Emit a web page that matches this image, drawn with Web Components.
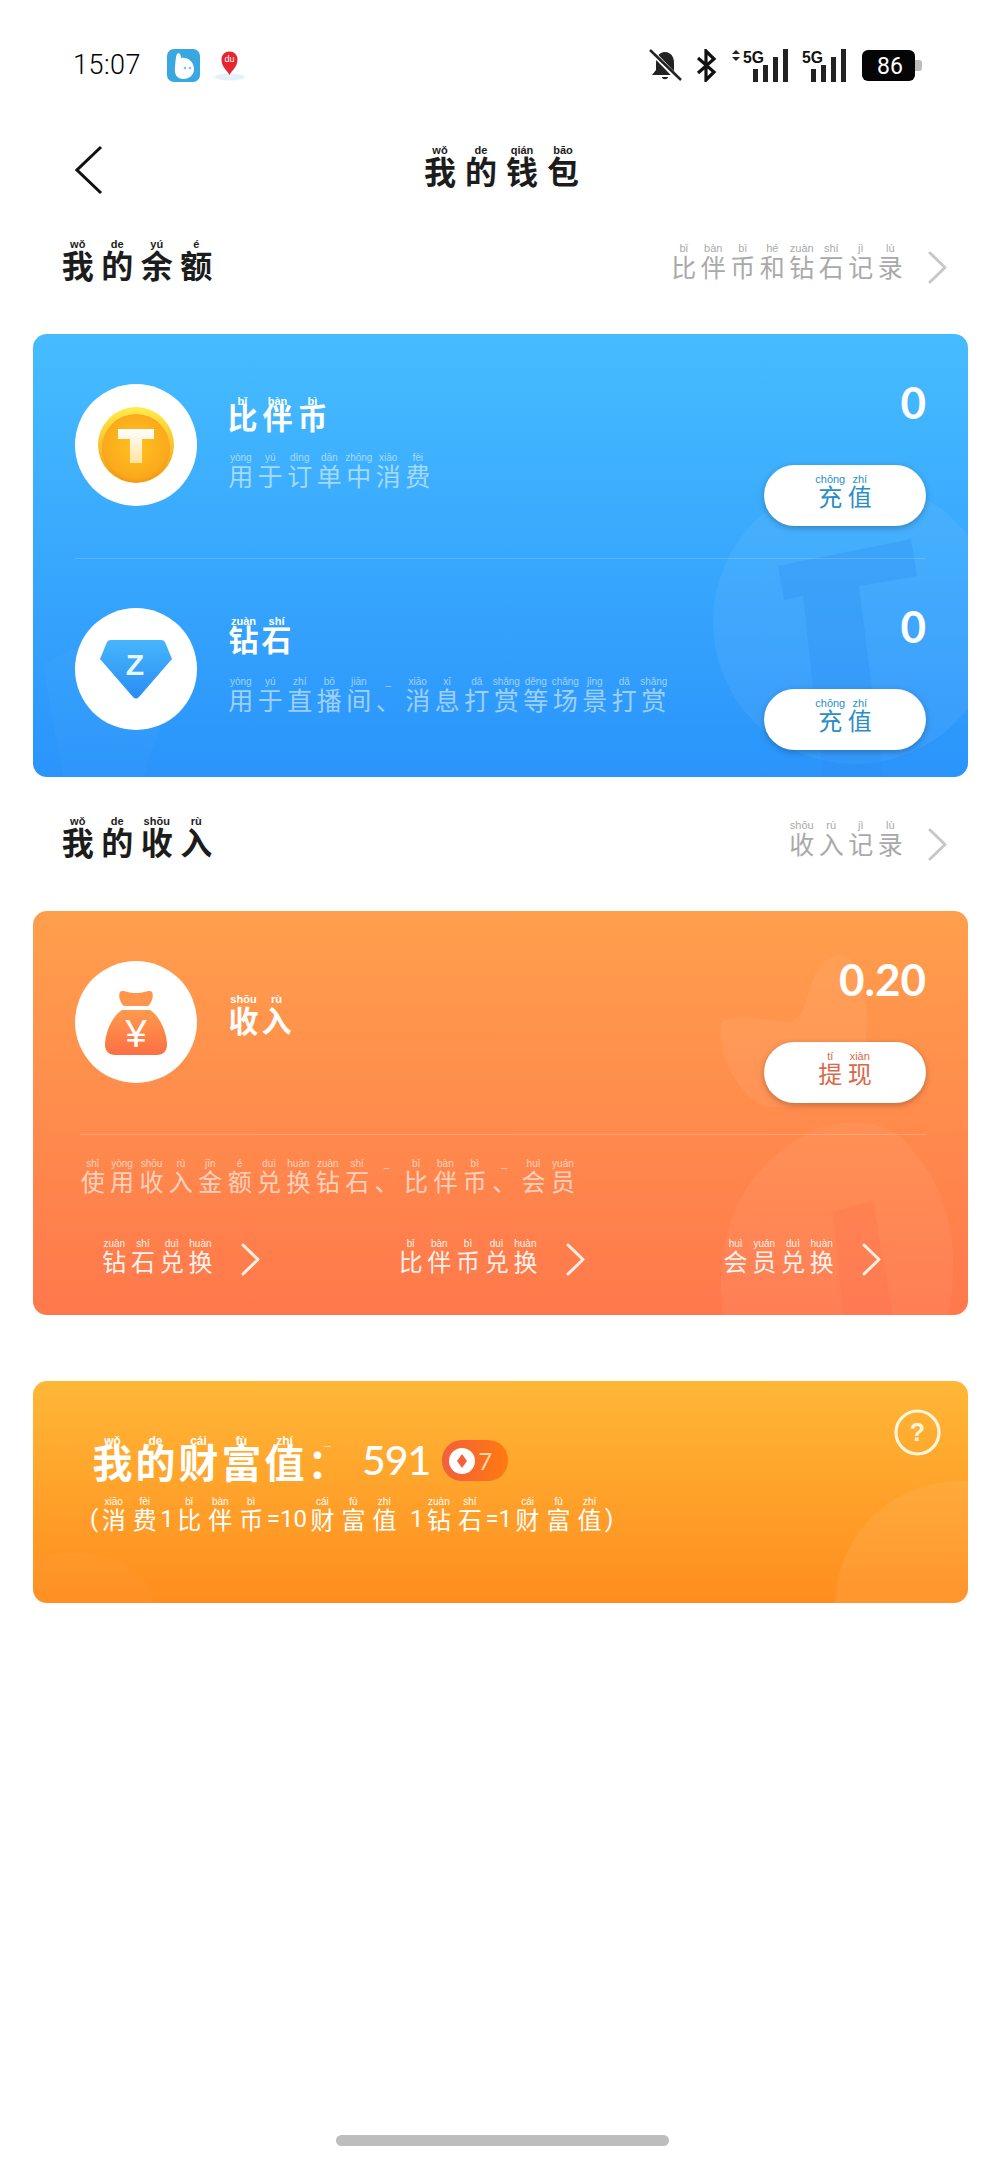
<!DOCTYPE html>
<html lang="zh">
<head>
<meta charset="utf-8">
<title>我的钱包</title>
<style>
html, body { margin: 0; background: #fff; }
body { font-family: "Noto Sans CJK SC", "Liberation Sans", sans-serif; }
</style>
</head>
<body>
<wallet-page></wallet-page>
<script>
class BaseHTMLElement extends HTMLElement {
    constructor() {
        super();
        this.attachShadow({ mode: 'open' });
    }

    render() {
        return '';
    }

    connectedCallback() {
        this.shadowRoot.innerHTML = `<style>${this.constructor.styles}</style>${this.render()}`;
    }
}

// text with pinyin over each character, t="字:zì 字:zì 1 = _"
class PyText extends BaseHTMLElement {
    static get styles() {
        return `
        :host {
            display: inline-flex;
            align-items: flex-end;
            white-space: nowrap;
        }
        .u {
            display: inline-flex;
            flex-direction: column;
            align-items: center;
            width: var(--p, 30px);
        }
        .py {
            font: var(--pw, 400) var(--ps, 10px)/var(--ps, 10px) "Liberation Sans", Roboto, sans-serif;
            margin-bottom: var(--pg, 0px);
            color: var(--pc, currentColor);
        }
        .c, .x {
            font: var(--w, 400) var(--s, 24px)/var(--s, 24px) "Noto Sans CJK SC", "Liberation Sans", sans-serif;
        }
        .x {
            font-family: Roboto, "Liberation Sans", sans-serif;
            font-weight: 400;
        }
        .sp {
            width: 10px;
        }
        `;
    }

    render() {
        return (this.getAttribute('t') || '').split(' ').map((token) => {
            if (token == '_') return '<span class="sp"></span>';
            let parts = token.split(':');
            if (parts.length < 2) return `<span class="x">${token}</span>`;
            return `<span class="u"><span class="py">${parts[1]}</span><span class="c">${parts[0]}</span></span>`;
        }).join('');
    }
}

class ChevronIcon extends BaseHTMLElement {
    static get styles() {
        return `
        :host { display: inline-flex; }
        svg { display: block; }
        `;
    }

    render() {
        let w = this.getAttribute('w') || 19;
        let h = this.getAttribute('h') || 33;
        let color = this.getAttribute('color') || '#c8c8c8';
        let stroke = this.getAttribute('stroke') || 3;
        return `<svg width="${w}" height="${h}" viewBox="0 0 19 33"><path d="M2 2 L17 16.5 L2 31" fill="none" stroke="${color}" stroke-width="${stroke}" stroke-linecap="round" stroke-linejoin="round"/></svg>`;
    }
}

class StatusBar extends BaseHTMLElement {
    static get styles() {
        return `
        :host {
            display: flex;
            align-items: center;
            justify-content: space-between;
            height: 64px;
            padding: 33px 76px 3px 73px;
            color: #000;
        }
        .left, .right { display: flex; align-items: center; }
        .time {
            font: 300 27px/32px Roboto, "Liberation Sans", sans-serif;
            letter-spacing: .5px;
            width: 94px;
        }
        svg { display: block; }
        .map { margin-left: 13px; }
        .bt { margin-left: 14px; }
        .s1 { margin-left: 14px; }
        .s2 { margin-left: 13px; }
        .bat { margin-left: 14px; }
        `;
    }

    render() {
        return `
        <div class="left">
            <span class="time">15:07</span>
            <svg width="33" height="33" viewBox="0 0 33 33"><rect width="33" height="33" rx="7" fill="#39a7e0"/><path d="M10 5 C12 3 14 5 14 9 C21 8 27 13 27 20 C27 27 21 30 16 30 C10 30 7 25 8 18 C8.500 13 8.500 8 10 5Z" fill="#fff"/><circle cx="18" cy="19" r="1.300" fill="#7cc4ea"/><circle cx="23" cy="19" r="1.300" fill="#7cc4ea"/></svg>
            <svg class="map" width="33" height="33" viewBox="0 0 33 33"><ellipse cx="16.500" cy="28" rx="15" ry="3.500" fill="#e3f2f8"/><path d="M16.500 26 C13.500 20.500 8.500 18 8.500 10.500 C8.500 6 12 2.500 16.500 2.500 C21 2.500 24.500 6 24.500 10.500 C24.500 18 19.500 20.500 16.500 26Z" fill="#e5252f"/><text x="16.500" y="13" text-anchor="middle" font-family="Liberation Sans" font-size="9" fill="#fff">du</text></svg>
        </div>
        <div class="right">
            <svg width="33" height="33" viewBox="0 0 33 33"><path d="M16 3 C10 3 7 8 7 14 L7 21 L3 26 L26 26 L25 21 L25 14 C25 8 22 3 16 3Z M13 28 C13 31 19 31 19 28Z" fill="#222"/><path d="M2 2 L31 32" stroke="#fff" stroke-width="5"/><path d="M1 1 L32 31" stroke="#222" stroke-width="2.500"/></svg>
            <svg class="bt" width="21" height="33" viewBox="0 0 21 33"><path d="M2 9 L18 23 L10 31 L10 2 L18 10 L2 24" fill="none" stroke="#111" stroke-width="3.200"/></svg>
            <svg class="s1" width="58" height="33" viewBox="0 0 58 33"><path d="M5 1 L9 5 L1 5Z M5 12 L9 8 L1 8Z" fill="#222"/><text x="12" y="14" font-family="Liberation Sans" font-weight="700" font-size="16" textLength="21" lengthAdjust="spacingAndGlyphs" fill="#111">5G</text><rect x="22" y="20" width="5" height="13" fill="#222"/><rect x="32" y="16" width="5" height="17" fill="#222"/><rect x="42" y="8" width="5" height="25" fill="#222"/><rect x="52" y="0" width="5" height="33" fill="#222"/></svg>
            <svg class="s2" width="46" height="33" viewBox="0 0 46 33"><text x="0" y="14" font-family="Liberation Sans" font-weight="700" font-size="16" textLength="21" lengthAdjust="spacingAndGlyphs" fill="#111">5G</text><rect x="9" y="20" width="5" height="13" fill="#222"/><rect x="19" y="16" width="5" height="17" fill="#222"/><rect x="29" y="8" width="5" height="25" fill="#222"/><rect x="39" y="0" width="5" height="33" fill="#222"/></svg>
            <svg class="bat" width="62" height="33" viewBox="0 0 62 33"><rect x="0" y="1" width="53" height="31" rx="6" fill="#050505"/><path d="M53 11 L57 11 Q60 11 60 14 L60 19 Q60 22 57 22 L53 22Z" fill="#bcbcbc"/><text x="28" y="25" text-anchor="middle" font-family="Roboto" font-size="23" fill="#fff">86</text></svg>
        </div>
        `;
    }
}

class NavBar extends BaseHTMLElement {
    static get styles() {
        return `
        :host {
            display: grid;
            grid-template-columns: 1fr auto 1fr;
            align-items: center;
            height: 100px;
            padding: 0 75px;
            color: #1c1c1c;
        }
        svg { display: block; margin-top: 40px; }
        py-text { --s: 32px; --p: 41px; --ps: 11px; --pw: 700; --w: 700; --pg: -2px; margin: 30px 0 0 3px; }
        `;
    }

    render() {
        return `
        <svg width="28" height="50" viewBox="0 0 28 50"><path d="M26 2 L2 25 L26 48" fill="none" stroke="#111" stroke-width="3"/></svg>
        <py-text t="我:wǒ 的:de 钱:qián 包:bāo"></py-text>
        <span></span>
        `;
    }
}

class SectionHead extends BaseHTMLElement {
    static get styles() {
        return `
        :host {
            display: flex;
            align-items: center;
            justify-content: space-between;
            height: 134px;
            padding: 0 53px 0 58px;
        }
        .title { color: #1c1c1c; --s: 32px; --p: 39.500px; --ps: 11px; --pw: 700; --w: 700; --pg: -2px; margin-bottom: 15px; }
        .link { display: flex; align-items: center; color: #a9a9a9; --s: 25px; --p: 29.500px; --ps: 11px; }
        .link py-text { margin-bottom: 13px; }
        chevron-icon { margin-left: 23px; }
        `;
    }

    render() {
        return `
        <py-text class="title" t="${this.getAttribute('title-t')}"></py-text>
        <span class="link"><py-text t="${this.getAttribute('link-t')}"></py-text><chevron-icon></chevron-icon></span>
        `;
    }
}

// round white icon, title + description, amount + button
class WalletRow extends BaseHTMLElement {
    static get styles() {
        return `
        :host {
            display: grid;
            grid-template-columns: 122px 1fr auto;
            column-gap: 30px;
            position: relative;
            color: #fff;
        }
        .disc {
            width: 122px;
            height: 122px;
            border-radius: 50%;
            background: #fff;
            display: flex;
            align-items: center;
            justify-content: center;
        }
        .text { display: flex; flex-direction: column; align-items: flex-start; }
        .side { display: flex; flex-direction: column; align-items: flex-end; margin-top: -4px; }
        .amount { font: 700 44px/44px Lato, "Liberation Sans", sans-serif; }
        .btn {
            display: flex;
            align-items: center;
            justify-content: center;
            width: 162px;
            height: 61px;
            margin-top: 41px;
            border-radius: 31px;
            background: #fff;
            box-shadow: 0 2px 6px rgba(0, 0, 0, .25);
            color: var(--btn-color);
            --s: 24px; --p: 29.500px; --ps: 11px; --pg: -1px;
        }
        .btn py-text { margin-bottom: 9px; }
        `;
    }

    render() {
        return `
        <div class="disc"><slot name="icon"></slot></div>
        <div class="text"><slot></slot></div>
        <div class="side">
            <span class="amount">${this.getAttribute('amount')}</span>
            <div class="btn"><py-text t="${this.getAttribute('btn-t')}"></py-text></div>
        </div>
        `;
    }
}

class BalanceCard extends BaseHTMLElement {
    static get styles() {
        return `
        :host {
            display: block;
            position: relative;
            margin: 0 32px 0 33px;
            height: 443px;
            border-radius: 14px;
            overflow: hidden;
            background: linear-gradient(180deg, #46bcff 0%, #2a94fb 100%);
            --btn-color: #2a8ec6;
        }
        .decor { position: absolute; inset: 0; }
        .rows { position: relative; padding: 50px 42px 0; }
        hr { border: 0; height: 1px; margin: 32px 0 49px; background: rgba(255, 255, 255, .16); }
        `;
    }

    render() {
        return `
        <svg class="decor" width="935" height="443" viewBox="0 0 935 443">
            <circle cx="822" cy="288" r="142" fill="#fff" opacity=".06"/>
            <path d="M745 232 L878 205 L884 242 L826 252 L850 443 L790 443 L770 262 L751 266Z" fill="#2a8df2" opacity=".3"/>
            <path d="M10 330 L70 300 L135 370 L110 443 L30 443Z" fill="#fff" opacity=".025"/>
        </svg>
        <div class="rows">
            <wallet-row amount="0" btn-t="充:chōng 值:zhí">
                <svg slot="icon" width="80" height="80" viewBox="0 0 80 80">
                    <defs>
                        <linearGradient id="rim" x1="0" y1="0" x2="0" y2="1"><stop offset="0" stop-color="#ffec4a"/><stop offset="1" stop-color="#f09a10"/></linearGradient>
                        <radialGradient id="gold" cx=".5" cy=".45" r=".6"><stop offset="0" stop-color="#ffc21f"/><stop offset=".8" stop-color="#fba91c"/><stop offset="1" stop-color="#ef8f0e"/></radialGradient>
                        <linearGradient id="tee" x1="0" y1="0" x2="0" y2="1"><stop offset="0" stop-color="#fff"/><stop offset="1" stop-color="#ffe3a0"/></linearGradient>
                    </defs>
                    <circle cx="40" cy="40" r="38" fill="url(#rim)"/>
                    <circle cx="40" cy="43" r="34" fill="url(#gold)"/>
                    <path d="M22 24 H58 V34 H46 V58 H34 V34 H22Z" fill="url(#tee)"/>
                </svg>
                <py-text t="比:bǐ 伴:bàn 币:bì" style="--s:30px;--p:35px;--ps:11px;--pw:700;--w:700;--pg:-6px;margin:12px 0 0 -2px"></py-text>
                <py-text t="用:yòng 于:yú 订:dìng 单:dān 中:zhōng 消:xiāo 费:fèi" style="--s:25px;--p:29.500px;--ps:10px;--pg:0px;margin:22px 0 0 -1px;color:rgba(255,255,255,.55)"></py-text>
            </wallet-row>
            <hr>
            <wallet-row amount="0" btn-t="充:chōng 值:zhí">
                <svg slot="icon" width="74" height="62" viewBox="0 0 74 62">
                    <defs><linearGradient id="gem" x1="0" y1="0" x2="0" y2="1"><stop offset="0" stop-color="#46b6fb"/><stop offset="1" stop-color="#2a8cf5"/></linearGradient></defs>
                    <path d="M12 2 H62 Q65 2 66 4 L73 21 L40 59 Q37 62 34 59 L1 21 L8 4 Q9 2 12 2Z" fill="url(#gem)"/>
                    <text x="36" y="37" text-anchor="middle" font-family="Liberation Sans" font-weight="700" font-size="30" fill="#e8f6ff">Z</text>
                </svg>
                <py-text t="钻:zuàn 石:shí" style="--s:30px;--p:33px;--ps:11px;--pw:700;--w:700;--pg:-4px;margin:8px 0 0 0"></py-text>
                <py-text t="用:yòng 于:yú 直:zhí 播:bō 间:jiān 、:_ 消:xiāo 息:xī 打:dǎ 赏:shǎng 等:děng 场:chǎng 景:jǐng 打:dǎ 赏:shǎng" style="--s:25px;--p:29.500px;--ps:10px;--pg:0px;margin:24px 0 0 -1px;color:rgba(255,255,255,.55)"></py-text>
            </wallet-row>
        </div>
        `;
    }
}

class IncomeCard extends BaseHTMLElement {
    static get styles() {
        return `
        :host {
            display: block;
            position: relative;
            margin: 0 32px 0 33px;
            height: 404px;
            border-radius: 14px;
            overflow: hidden;
            background: linear-gradient(180deg, #ff9f4c 0%, #ff784c 100%);
            --btn-color: #d9694a;
        }
        .decor { position: absolute; inset: 0; }
        .rows { position: relative; padding: 50px 42px 0; color: #fff; }
        hr { border: 0; height: 1px; margin: 31px 0 0 5px; background: rgba(255, 255, 255, .2); }
        .note { display: flex; margin: 24px 0 0 3px; color: rgba(255, 255, 255, .65); --s: 24px; --p: 29.400px; --ps: 10px; }
        .links { display: flex; justify-content: space-between; margin: 42px 45px 0 25px; --s: 24px; --p: 28.700px; --ps: 10px; }
        .link { display: flex; align-items: center; color: rgba(255, 255, 255, .92); }
        chevron-icon { margin: 8px 0 0 26px; }
        `;
    }

    render() {
        return `
        <svg class="decor" width="935" height="404" viewBox="0 0 935 404">
            <path d="M690 110 C720 100 745 115 760 110 C780 100 770 60 800 45 C830 35 840 100 830 150 C825 190 760 200 730 195 C700 180 680 130 690 110Z" fill="#fff" opacity=".06"/>
            <path d="M690 404 C680 330 705 260 770 225 C800 205 860 205 880 240 C925 290 925 360 915 404Z" fill="#fff" opacity=".05"/>
            <path d="M800 300 L810 404 L860 404 L840 290Z" fill="#ff6a45" opacity=".2"/>
        </svg>
        <div class="rows">
            <wallet-row amount="0.20" btn-t="提:tí 现:xiàn">
                <svg slot="icon" width="62" height="66" viewBox="0 0 62 66">
                    <defs><linearGradient id="bag" x1="0" y1="0" x2="0" y2="1"><stop offset="0" stop-color="#ff9a4c"/><stop offset="1" stop-color="#fb6f45"/></linearGradient></defs>
                    <path d="M15 3 C18 0 22 4 31 4 C40 4 44 0 47 3 C49 6 47 14 43 17 H19 C15 14 13 6 15 3Z" fill="#ff964c"/>
                    <path d="M17 21 H45 C55 27 62 44 62 56 C62 62 58 66 52 66 H10 C4 66 0 62 0 56 C0 44 7 27 17 21Z" fill="url(#bag)"/>
                    <text x="31" y="58" text-anchor="middle" font-family="Liberation Sans" font-size="38" fill="#fff">¥</text>
                </svg>
                <py-text t="收:shōu 入:rù" style="--s:30px;--p:33px;--ps:11px;--pw:700;--w:700;--pg:-1px;margin:33px 0 0 0"></py-text>
            </wallet-row>
            <hr>
            <py-text class="note" t="使:shǐ 用:yòng 收:shōu 入:rù 金:jīn 额:é 兑:duì 换:huàn 钻:zuàn 石:shí 、:_ 比:bǐ 伴:bàn 币:bì 、:_ 会:huì 员:yuán"></py-text>
            <div class="links">
                <span class="link"><py-text t="钻:zuàn 石:shí 兑:duì 换:huàn"></py-text><chevron-icon color="#fff0e6"></chevron-icon></span>
                <span class="link"><py-text t="比:bǐ 伴:bàn 币:bì 兑:duì 换:huàn"></py-text><chevron-icon color="#fff0e6"></chevron-icon></span>
                <span class="link"><py-text t="会:huì 员:yuán 兑:duì 换:huàn"></py-text><chevron-icon color="#fff0e6"></chevron-icon></span>
            </div>
        </div>
        `;
    }
}

class WealthCard extends BaseHTMLElement {
    static get styles() {
        return `
        :host {
            display: block;
            position: relative;
            margin: 66px 32px 0 33px;
            height: 222px;
            border-radius: 14px;
            overflow: hidden;
            background: linear-gradient(180deg, #ffb737 0%, #ff8d1e 100%);
            color: #fff;
        }
        .decor { position: absolute; inset: 0; }
        .help { position: absolute; right: 27px; top: 28px; }
        .body { position: relative; padding: 54px 0 0 57px; }
        .head { display: flex; align-items: flex-end; --s: 40px; --p: 43px; --ps: 12px; --pw: 700; --w: 700; --pg: -6px; margin-left: 1px; }
        .num { font: 500 41px/42px Lato, "Liberation Sans", sans-serif; letter-spacing: -1px; margin-left: 13px; }
        .badge {
            display: flex;
            align-items: center;
            width: 66px;
            height: 41px;
            margin-left: 12px;
            border-radius: 20px;
            background: linear-gradient(90deg, #f2603c, #ff7a10);
            color: #ffd9a8;
            font: 400 24px/41px Lato, "Liberation Sans", sans-serif;
        }
        .badge svg { margin: 0 3px 0 7px; display: block; }
        .sub { display: flex; margin: 16px 0 0; --s: 24px; --p: 31px; --ps: 10px; --pg: 0px; }
        `;
    }

    render() {
        return `
        <svg class="decor" width="935" height="222" viewBox="0 0 935 222">
            <circle cx="927" cy="225" r="125" fill="#fff" opacity=".07"/>
            <ellipse cx="40" cy="222" rx="80" ry="50" fill="#fff" opacity=".025"/>
        </svg>
        <div class="body">
            <div class="head">
                <py-text t="我:wǒ 的:de 财:cái 富:fù 值:zhí ：:_"></py-text>
                <span class="num">591</span>
                <span class="badge"><svg width="26" height="26" viewBox="0 0 26 26"><circle cx="13" cy="13" r="13" fill="#fff"/><path d="M13 6 L18 13 L13 20 L8 13Z" fill="#f2603c"/></svg>7</span>
            </div>
            <py-text class="sub" t="( 消:xiāo 费:fèi 1 比:bǐ 伴:bàn 币:bì = 10 财:cái 富:fù 值:zhí _ 1 钻:zuàn 石:shí = 1 财:cái 富:fù 值:zhí )"></py-text>
        </div>
        <svg class="help" width="47" height="47" viewBox="0 0 47 47"><circle cx="23.500" cy="23.500" r="21.500" fill="none" stroke="#fdf6dc" stroke-width="3.200"/><text x="23.500" y="32" text-anchor="middle" font-family="Liberation Sans" font-weight="700" font-size="25" fill="#fdf6dc">?</text></svg>
        `;
    }
}

class WalletPage extends BaseHTMLElement {
    static get styles() {
        return `
        :host {
            display: block;
            position: relative;
            height: 2170px;
            overflow: hidden;
        }
        .home {
            position: absolute;
            left: 336px;
            top: 2135px;
            width: 333px;
            height: 11px;
            border-radius: 6px;
            background: #bdbdbd;
        }
        `;
    }

    render() {
        return `
        <status-bar></status-bar>
        <nav-bar></nav-bar>
        <section-head title-t="我:wǒ 的:de 余:yú 额:é" link-t="比:bǐ 伴:bàn 币:bì 和:hé 钻:zuàn 石:shí 记:jì 录:lù"></section-head>
        <balance-card></balance-card>
        <section-head title-t="我:wǒ 的:de 收:shōu 入:rù" link-t="收:shōu 入:rù 记:jì 录:lù"></section-head>
        <income-card></income-card>
        <wealth-card></wealth-card>
        <div class="home"></div>
        `;
    }
}

customElements.define('py-text', PyText);
customElements.define('chevron-icon', ChevronIcon);
customElements.define('status-bar', StatusBar);
customElements.define('nav-bar', NavBar);
customElements.define('section-head', SectionHead);
customElements.define('wallet-row', WalletRow);
customElements.define('balance-card', BalanceCard);
customElements.define('income-card', IncomeCard);
customElements.define('wealth-card', WealthCard);
customElements.define('wallet-page', WalletPage);
</script>
</body>
</html>
